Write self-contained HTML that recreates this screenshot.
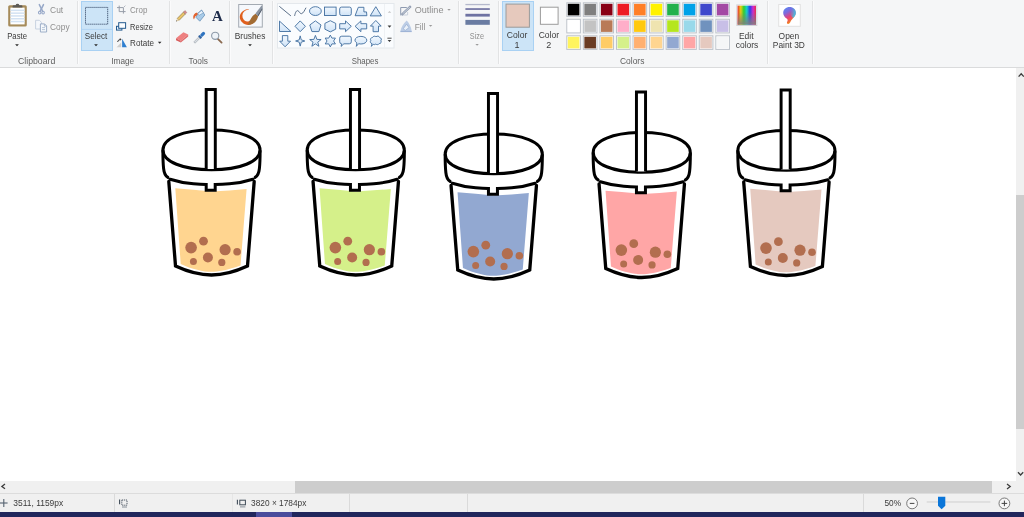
<!DOCTYPE html>
<html lang="en">
<head>
<meta charset="utf-8">
<title>Paint</title>
<style>
html,body{margin:0;padding:0;}
body{width:1024px;height:517px;overflow:hidden;background:#fff;position:relative;font-family:"Liberation Sans",sans-serif;}
#ribbon{position:absolute;left:0;top:0;width:1024px;height:67px;background:#f5f6f7;border-bottom:1px solid #dadbdc;}
#canvas{position:absolute;left:0;top:68px;width:1015.5px;height:413px;background:#fff;}
#vscroll{position:absolute;left:1015.5px;top:68px;width:8.5px;height:413px;background:#f0f0f0;}
#vthumb{position:absolute;left:0.5px;top:127px;width:8px;height:233.6px;background:#cdcdcd;}
#hscroll{position:absolute;left:0;top:481px;width:1024px;height:12px;background:#f0f0f0;}
#hthumb{position:absolute;left:295.2px;top:0;width:696.7px;height:12px;background:#cdcdcd;}
#status{position:absolute;left:0;top:493px;width:1024px;height:19px;background:#f0f0f0;border-top:1px solid #dcdcdc;box-sizing:border-box;}
#taskbar{position:absolute;left:0;top:512px;width:1024px;height:5px;background:#21265c;}
#taskhl{position:absolute;left:256px;top:0;width:36px;height:5px;background:#4a4c9c;}
svg{position:absolute;left:0;top:0;overflow:visible;will-change:transform;}
svg text{font-family:"Liberation Sans",sans-serif;font-size:9px;}
.t{fill:#3b3b3b;}
.d{fill:#8e8e8e;}
.g{fill:#5e5e5e;}
</style>
</head>
<body>
<div id="ribbon"></div>
<div id="canvas"></div>
<div id="vscroll"><div id="vthumb"></div></div>
<div id="hscroll"><div id="hthumb"></div></div>
<div id="status"></div>
<div id="taskbar"><div id="taskhl"></div></div>

<!-- RIBBON -->
<svg id="rib" width="1024" height="68" viewBox="0 0 1024 68">
<defs>
<linearGradient id="shpf" x1="0" y1="0" x2="0" y2="1"><stop offset="0" stop-color="#f2f8fe"/><stop offset="1" stop-color="#cfe3f7"/></linearGradient>
<linearGradient id="rainbow" x1="0" y1="0" x2="1" y2="0"><stop offset="0" stop-color="#ff2020"/><stop offset="0.17" stop-color="#ffe000"/><stop offset="0.34" stop-color="#20e020"/><stop offset="0.5" stop-color="#00e0e0"/><stop offset="0.67" stop-color="#2030ff"/><stop offset="0.84" stop-color="#e020e0"/><stop offset="1" stop-color="#ff2040"/></linearGradient>
<linearGradient id="fadegray" x1="0" y1="0" x2="0" y2="1"><stop offset="0" stop-color="#707070" stop-opacity="0.12"/><stop offset="0.35" stop-color="#787878" stop-opacity="0.2"/><stop offset="1" stop-color="#808080" stop-opacity="0.95"/></linearGradient>
<linearGradient id="p3d" x1="0.15" y1="0" x2="0.6" y2="1"><stop offset="0" stop-color="#5a8af0"/><stop offset="0.3" stop-color="#7a6ae0"/><stop offset="0.6" stop-color="#e8407a"/><stop offset="0.85" stop-color="#f07030"/><stop offset="1" stop-color="#f8c820"/></linearGradient>
<linearGradient id="p3d2" x1="0" y1="0" x2="1" y2="0.4"><stop offset="0.3" stop-color="#30c0f0" stop-opacity="0"/><stop offset="1" stop-color="#30c8f0" stop-opacity="0.95"/></linearGradient>
</defs>
<!-- separators -->
<g stroke="#fbfbfc" stroke-width="1">
<line x1="78.5" y1="1" x2="78.5" y2="64"/><line x1="170.5" y1="1" x2="170.5" y2="64"/><line x1="230.5" y1="1" x2="230.5" y2="64"/><line x1="273.5" y1="1" x2="273.5" y2="64"/><line x1="459.5" y1="1" x2="459.5" y2="64"/><line x1="499.5" y1="1" x2="499.5" y2="64"/><line x1="768.5" y1="1" x2="768.5" y2="64"/><line x1="813.5" y1="1" x2="813.5" y2="64"/>
</g>
<g stroke="#e2e3e4" stroke-width="1">
<line x1="77.5" y1="1" x2="77.5" y2="64"/>
<line x1="169.5" y1="1" x2="169.5" y2="64"/>
<line x1="229.5" y1="1" x2="229.5" y2="64"/>
<line x1="272.5" y1="1" x2="272.5" y2="64"/>
<line x1="458.5" y1="1" x2="458.5" y2="64"/>
<line x1="498.5" y1="1" x2="498.5" y2="64"/>
<line x1="767.5" y1="1" x2="767.5" y2="64"/>
<line x1="812.5" y1="1" x2="812.5" y2="64"/>
</g>
<!--CLIPBOARD-->
<g id="g-clipboard">
<!-- paste icon -->
<rect x="8.2" y="5.2" width="18.6" height="21.4" rx="1.6" fill="#a68b5a"/>
<rect x="10.4" y="7.6" width="14.2" height="16.8" fill="#fff"/>
<g fill="#d3e2f2"><rect x="10.4" y="9.6" width="14.2" height="1.5"/><rect x="10.4" y="12.4" width="14.2" height="1.5"/><rect x="10.4" y="15.2" width="14.2" height="1.5"/><rect x="10.4" y="18" width="14.2" height="1.5"/><rect x="10.4" y="20.8" width="14.2" height="1.5"/></g>
<path d="M12.6 7.6 V6 Q12.6 5.2 13.6 5.2 H15.6 Q16 3.8 17.5 3.8 Q19 3.8 19.4 5.2 H21.4 Q22.4 5.2 22.4 6 V7.6Z" fill="#5d5a55"/>
<text class="t" x="7.2" y="38.5" textLength="19.8" lengthAdjust="spacingAndGlyphs">Paste</text>
<path d="M15.1 43.6h3.8l-1.9 2z" fill="#2b2b2b" transform="translate(0 0.6)"/>
<!-- cut icon (disabled) -->
<g fill="none" stroke="#97a8c8" stroke-linecap="round">
<path d="M39.3 4.6 L42.7 11.4" stroke-width="1.5"/><path d="M43.5 4.6 L40.1 11.4" stroke-width="1.5"/>
<ellipse cx="39.7" cy="12.6" rx="1.25" ry="1.4" stroke-width="1.1"/><ellipse cx="43.1" cy="12.6" rx="1.25" ry="1.4" stroke-width="1.1"/>
</g>
<text class="d" x="50.1" y="12.9" textLength="13.1" lengthAdjust="spacingAndGlyphs">Cut</text>
<!-- copy icon (disabled) -->
<g stroke-width="0.9">
<path d="M35.6 20.3 H39.4 L41.4 22.3 V29 H35.6Z" fill="#f4f7fb" stroke="#c3cede"/>
<path d="M40.4 23.9 H44.6 L46.6 25.9 V32 H40.4Z" fill="#f6f9fc" stroke="#93a6c2"/>
<path d="M44.4 24 V26.1 H46.5" fill="none" stroke="#93a6c2" stroke-width="0.7"/>
<path d="M42 27.6 H45 M42 29.6 H45" fill="none" stroke="#9fb1cb" stroke-width="0.7"/>
</g>
<text class="d" x="50.1" y="29.6" textLength="19.5" lengthAdjust="spacingAndGlyphs">Copy</text>
<text class="g" x="18" y="63.5" textLength="37.3" lengthAdjust="spacingAndGlyphs">Clipboard</text>
</g>
<!--IMAGE-->
<g id="g-image">
<rect x="81.5" y="1.5" width="31" height="49" fill="#cce4f7" stroke="#a9d1f3"/>
<line x1="82" y1="29.4" x2="112" y2="29.4" stroke="#b2d5f3"/>
<rect x="85.5" y="7.4" width="22.2" height="16.8" fill="none" stroke="#2a3d5c" stroke-width="0.95" stroke-dasharray="1.1 0.9"/>
<text class="t" x="84.8" y="38.5" textLength="22.4" lengthAdjust="spacingAndGlyphs">Select</text>
<path d="M94.1 43.6h3.8l-1.9 2z" fill="#2b2b2b" transform="translate(0 0.6)"/>
<!-- crop icon (disabled) -->
<g fill="none" stroke="#979da8" stroke-width="1"><path d="M119.2 5.6 V11.6 H125.6"/><path d="M117 7.6 H123.4 V13.6"/><path d="M123.6 7.4 L125.4 5.6" stroke="#b2b7c1"/></g>
<text class="d" x="130.1" y="12.9" textLength="17.3" lengthAdjust="spacingAndGlyphs">Crop</text>
<!-- resize icon -->
<g stroke="#245a8e" stroke-width="1"><rect x="116.5" y="26.3" width="5.4" height="3.8" fill="#e3eefa"/><rect x="118.7" y="22.7" width="6.9" height="5.6" fill="#fbfdff"/></g>
<text class="t" x="130.1" y="29.5" textLength="22.8" lengthAdjust="spacingAndGlyphs">Resize</text>
<!-- rotate icon -->
<path d="M122.1 47.2 V38.8 L126.9 47.2Z" fill="#2f7fd0"/>
<path d="M121.2 47.2 V42.6 L116.6 47.2Z" fill="#cfcfcf"/>
<path d="M117.6 42 Q118 39.6 120.4 39.4" fill="none" stroke="#3a3a3a" stroke-width="1"/><path d="M119.8 38.1 L121.6 39.4 L119.8 40.7Z" fill="#3a3a3a"/>
<text class="t" x="130.1" y="45.8" textLength="23.8" lengthAdjust="spacingAndGlyphs">Rotate</text>
<path d="M157.9 41.8h3.6l-1.8 2z" fill="#2b2b2b"/>
<text class="g" x="111.3" y="63.5" textLength="22.9" lengthAdjust="spacingAndGlyphs">Image</text>
</g>
<!--TOOLS-->
<g id="g-tools">
<!-- pencil -->
<g transform="translate(181.3 16.2) rotate(-45.5)">
<rect x="-4.6" y="-1.35" width="9" height="2.7" fill="#e9c468" stroke="#7d6c46" stroke-width="0.55"/>
<rect x="4.4" y="-1.35" width="2.2" height="2.7" fill="#d98a8a" stroke="#8a6a6a" stroke-width="0.4"/>
<path d="M-4.6 -1.35 L-7.4 0 L-4.6 1.35Z" fill="#e8d2a8"/><path d="M-6.3 -0.55 L-7.5 0 L-6.3 0.55Z" fill="#333"/>
</g>
<!-- bucket -->
<g>
<path d="M197.6 13.4 L201.6 10 L204.8 15 L199.8 21.2 L196 17.4Z" fill="#a8cbe8" stroke="#5b86b0" stroke-width="0.7"/>
<path d="M197.8 13.6 L201.6 10.4 L203.4 12.8 L199 15.4Z" fill="#e7f1fa" stroke="#5b86b0" stroke-width="0.5"/>
<path d="M197.2 12.6 Q193.6 13.4 193.2 16.8 Q193 18.6 194 19.4 Q194.6 16 197.6 14.8Z" fill="#e2622e"/>
</g>
<!-- text A -->
<text x="212" y="20.8" textLength="10.8" lengthAdjust="spacingAndGlyphs" style='font-family:"Liberation Serif",serif;font-weight:bold;font-size:14.2px' fill="#1d2b4a">A</text>
<!-- eraser -->
<g>
<path d="M176 38.2 L183.4 32.2 L188.2 34.6 L180.8 40.8Z" fill="#ee8080"/>
<path d="M176 38.2 L180.8 40.8 L180.8 42.6 L176 40.2Z" fill="#d85c5c"/>
<path d="M180.8 40.8 L188.2 34.6 L188.2 36.4 L180.8 42.6Z" fill="#e06a6a"/>
</g>
<!-- eyedropper -->
<g transform="translate(199.8 37.2) rotate(-45)">
<rect x="-7.6" y="-0.9" width="7.4" height="1.8" fill="#d8dde2" stroke="#8a949e" stroke-width="0.5"/>
<rect x="-0.6" y="-1.8" width="2" height="3.6" fill="#2d5f9e"/>
<rect x="1.4" y="-1.6" width="5.4" height="3.2" rx="1.5" fill="#2f74c0"/>
</g>
<!-- magnifier -->
<g>
<path d="M217.8 38.8 L221.6 42.6" stroke="#8a6a50" stroke-width="1.8" stroke-linecap="round"/>
<circle cx="215.2" cy="35.8" r="3.6" fill="#eef3f8" stroke="#8d9aa8" stroke-width="1.1"/>
</g>
<text class="g" x="188.6" y="63.5" textLength="19.4" lengthAdjust="spacingAndGlyphs">Tools</text>
</g>
<!--BRUSHES-->
<g id="g-brushes">
<rect x="238.7" y="4.5" width="23.6" height="22.6" fill="#f5f8fc" stroke="#a3aab2" stroke-width="1"/>
<path d="M248.8 9 C245 9.2 240.4 11.6 239.8 16.4 C239.6 21 243.6 24.6 248.4 24.9 C250.6 24.9 252.4 24.2 253.4 22.8 L250.2 20.2 C248.8 21.8 246.6 22 244.8 20.8 C242.6 19.2 241.8 16.4 242.8 13.6 C243.8 11.4 245.8 10 248.8 9.6 Z" fill="#e0601e"/>
<path d="M247.4 24.6 C249.6 22.8 249.6 20 251.6 17.4 C253 15.6 254.6 14.4 255.8 13.8 L258.2 16 C257.8 18 256.8 20.4 255 22.2 C253 24.2 250 25 247.4 24.6Z" fill="#a26c34"/>
<path d="M255.4 13.6 L261.4 5.8 L262.2 5.8 L262.2 9.4 L258.2 16.2Z" fill="#8b95a3"/>
<path d="M257.6 15.6 L262.2 8.2 V9.6 L258.3 16.3Z" fill="#4f5966"/>
<text class="t" x="234.8" y="38.5" textLength="30.6" lengthAdjust="spacingAndGlyphs">Brushes</text>
<path d="M248.1 43.6h3.8l-1.9 2z" fill="#2b2b2b" transform="translate(0 0.6)"/>
</g>
<!--SHAPES-->
<g id="g-shapes">
<rect x="277.5" y="3.5" width="116.5" height="44.5" fill="#fafcfe" stroke="#e4e8ec"/>
<line x1="384.5" y1="4" x2="384.5" y2="48" stroke="#eef1f4"/>
<g fill="url(#shpf)" stroke="#3f6d9e" stroke-width="0.9" stroke-linejoin="miter">
<g transform="translate(285.1 11.3)"><path d="M-5.8 -5 L5.8 4.6" stroke="#4a607c" fill="none"/></g>
<g transform="translate(300.2 11.3)"><path d="M-5.6 4.6 C-4.8 0.5 -3.5 -1 -2.3 -0.6 C-0.8 0 -0.3 2.6 1.2 2.4 C3.3 2 4.6 -1.5 5.8 -3.6" fill="none" stroke="#4a607c"/></g>
<g transform="translate(315.4 11.3)"><ellipse cx="0" cy="-0.2" rx="5.9" ry="4.4"/></g>
<g transform="translate(330.3 11.3)"><rect x="-5.8" y="-4.2" width="11.6" height="8.4"/></g>
<g transform="translate(345.5 11.3)"><rect x="-5.8" y="-4.2" width="11.6" height="8.4" rx="1.8"/></g>
<g transform="translate(360.9 11.3)"><polygon points="-2.6,-4 3,-4 3,0.6 5.6,0.6 6,4.4 -5.8,4.4"/></g>
<g transform="translate(375.8 11.3)"><polygon points="0,-4.6 5.6,4.6 -5.6,4.6"/></g>
<g transform="translate(285.1 26.3)"><polygon points="-5.6,-5.2 5.8,5.2 -5.6,5.2"/></g>
<g transform="translate(300.2 26.3)"><polygon points="0,-5.4 5.2,0 0,5.4 -5.2,0"/></g>
<g transform="translate(315.4 26.3)"><polygon points="0.00,-5.40 5.61,-1.32 3.47,5.27 -3.47,5.27 -5.61,-1.32"/></g>
<g transform="translate(330.3 26.3)"><polygon points="0,-5.6 5.4,-2.9 5.4,2.9 0,5.6 -5.4,2.9 -5.4,-2.9"/></g>
<g transform="translate(345.5 26.3)"><polygon points="-5.8,-2.6 0,-2.6 0,-5.4 5.8,0 0,5.4 0,2.6 -5.8,2.6"/></g>
<g transform="translate(360.9 26.3)"><polygon points="5.8,-2.6 0,-2.6 0,-5.4 -5.8,0 0,5.4 0,2.6 5.8,2.6"/></g>
<g transform="translate(375.8 26.3)"><polygon points="0,-5.8 5.4,-0.2 2.7,-0.2 2.7,5.4 -2.7,5.4 -2.7,-0.2 -5.4,-0.2"/></g>
<g transform="translate(285.1 41.0)"><polygon points="0,5.8 5.4,0.2 2.7,0.2 2.7,-5.4 -2.7,-5.4 -2.7,0.2 -5.4,0.2"/></g>
<g transform="translate(300.2 41.0)"><polygon points="0.00,-5.13 1.02,-1.14 4.59,0.00 1.02,1.14 0.00,5.13 -1.02,1.14 -4.59,0.00 -1.02,-1.14"/></g>
<g transform="translate(315.4 41.0)"><polygon points="0.00,-5.60 1.47,-1.62 5.71,-1.45 2.38,1.17 3.53,5.25 0.00,2.90 -3.53,5.25 -2.38,1.17 -5.71,-1.45 -1.47,-1.62"/></g>
<g transform="translate(330.3 41.0)"><polygon points="0.00,-5.90 1.65,-2.86 5.11,-2.95 3.30,0.00 5.11,2.95 1.65,2.86 0.00,5.90 -1.65,2.86 -5.11,2.95 -3.30,0.00 -5.11,-2.95 -1.65,-2.86"/></g>
<g transform="translate(345.5 41.0)"><path d="M-3.8 -4.8 H3.8 Q5.8 -4.8 5.8 -2.8 V0.8 Q5.8 2.8 3.8 2.8 H-1.6 L-4.4 5.4 L-3.9 2.8 Q-5.8 2.8 -5.8 0.8 V-2.8 Q-5.8 -4.8 -3.8 -4.8Z"/></g>
<g transform="translate(360.9 41.0)"><path d="M0 -4.6 C3.4 -4.6 5.9 -3 5.9 -0.8 C5.9 1.4 3.4 3 0 3 C-0.8 3 -1.6 2.9 -2.3 2.7 L-4.6 5.4 L-4 1.9 C-5.2 1.2 -5.9 0.2 -5.9 -0.8 C-5.9 -3 -3.4 -4.6 0 -4.6Z"/></g>
<g transform="translate(375.8 41.0)"><path d="M-3.2 -3.6 C-2.6 -5 -0.6 -5.2 0.2 -4.2 C1.2 -5.4 3.6 -5 3.9 -3.4 C5.6 -3.2 6.2 -1.2 5 -0.2 C6 1 5 2.8 3.4 2.6 C2.8 3.8 0.8 4 0 3 C-0.6 3.8 -2 3.8 -2.6 3.2 L-4.4 5.4 L-3.8 2.6 C-5.4 2.4 -6 0.6 -5 -0.4 C-6 -1.6 -4.8 -3.6 -3.2 -3.6Z"/></g>
</g>

<path d="M387.8 12.8 h3.4 l-1.7 -1.9z" fill="#c4c4c4"/>
<path d="M387.6 25.6 h3.8 l-1.9 2.1z" fill="#3a3a3a"/>
<path d="M387.4 38.2 h4.2" stroke="#3a3a3a" stroke-width="0.9"/><path d="M387.6 40 h3.8 l-1.9 2.1z" fill="#3a3a3a"/>
<!-- outline icon -->
<g fill="none" stroke-linecap="butt"><path d="M400.7 15.4 V7.5 H406.8" stroke="#8e9bb0" stroke-width="1"/><path d="M400.7 15 H407.6 V12" stroke="#c5cdd9" stroke-width="0.9"/><path d="M401.6 14.8 L410.8 6.2" stroke="#8f9bb0" stroke-width="2.3"/><path d="M402.6 13.8 L409.8 7.1" stroke="#dde3ec" stroke-width="0.8"/></g>
<text class="d" x="414.7" y="12.9" textLength="28.8" lengthAdjust="spacingAndGlyphs">Outline</text>
<path d="M447.3 8.9h3.4l-1.7 1.8z" fill="#9a9a9a"/>
<!-- fill icon -->
<g><path d="M400.4 31.6 C400.9 27.4 403.2 24 406.7 20.6 C409.4 23.6 411.2 27.2 411.7 31.6Z" fill="#bccde6"/><path d="M403.2 28.8 L406.6 24.2 L409 27.6 L405.4 30.4Z" fill="#e9f0f9" stroke="#95acd0" stroke-width="0.7"/><path d="M400.4 31.5 H411.7" stroke="#9fb4d6" stroke-width="1.2"/></g>
<text class="d" x="414.7" y="29.5" textLength="10.6" lengthAdjust="spacingAndGlyphs">Fill</text>
<path d="M428.9 25h3.4l-1.7 1.8z" fill="#9a9a9a"/>
<text class="g" x="351.7" y="63.5" textLength="26.7" lengthAdjust="spacingAndGlyphs">Shapes</text>
</g>
<!--SIZE-->
<g id="g-size">
<rect x="465.4" y="3.9" width="24.4" height="1.3" fill="#b4b8cc"/>
<rect x="465.4" y="8.1" width="24.4" height="1.9" fill="#7e80aa"/>
<rect x="465.4" y="13.8" width="24.4" height="2.8" fill="#6e72a2"/>
<rect x="465.4" y="19.9" width="24.4" height="4.9" fill="#6a7ca2"/>
<text class="d" x="469.8" y="38.5" textLength="14.2" lengthAdjust="spacingAndGlyphs">Size</text>
<path d="M475.4 44.1h3.4l-1.7 1.7z" fill="#9a9a9a"/>
</g>
<!--COLORS-->
<g id="g-colors">
<rect x="502.5" y="1.5" width="31" height="49" fill="#cce4f7" stroke="#a9d1f3"/>
<rect x="506" y="4.1" width="23.4" height="23.1" fill="#e6c9bd" stroke="#9b9b9b"/>
<text class="t" x="506.8" y="38.4" textLength="20.5" lengthAdjust="spacingAndGlyphs">Color</text>
<text class="t" x="516.9" y="47.7" text-anchor="middle">1</text>
<rect x="540.4" y="7.2" width="17.7" height="17.1" fill="#fff" stroke="#9b9b9b"/>
<text class="t" x="538.7" y="38.4" textLength="20.4" lengthAdjust="spacingAndGlyphs">Color</text>
<text class="t" x="548.7" y="47.7" text-anchor="middle">2</text>
<g>
<rect x="566.80" y="2.80" width="13.6" height="13.6" fill="#fff" stroke="#bdc3ca" stroke-width="1"/><rect x="567.80" y="3.80" width="11.6" height="11.6" fill="#000000"/>
<rect x="583.36" y="2.80" width="13.6" height="13.6" fill="#fff" stroke="#bdc3ca" stroke-width="1"/><rect x="584.36" y="3.80" width="11.6" height="11.6" fill="#7f7f7f"/>
<rect x="599.92" y="2.80" width="13.6" height="13.6" fill="#fff" stroke="#bdc3ca" stroke-width="1"/><rect x="600.92" y="3.80" width="11.6" height="11.6" fill="#880015"/>
<rect x="616.48" y="2.80" width="13.6" height="13.6" fill="#fff" stroke="#bdc3ca" stroke-width="1"/><rect x="617.48" y="3.80" width="11.6" height="11.6" fill="#ed1c24"/>
<rect x="633.04" y="2.80" width="13.6" height="13.6" fill="#fff" stroke="#bdc3ca" stroke-width="1"/><rect x="634.04" y="3.80" width="11.6" height="11.6" fill="#ff7f27"/>
<rect x="649.60" y="2.80" width="13.6" height="13.6" fill="#fff" stroke="#bdc3ca" stroke-width="1"/><rect x="650.60" y="3.80" width="11.6" height="11.6" fill="#fff200"/>
<rect x="666.16" y="2.80" width="13.6" height="13.6" fill="#fff" stroke="#bdc3ca" stroke-width="1"/><rect x="667.16" y="3.80" width="11.6" height="11.6" fill="#22b14c"/>
<rect x="682.72" y="2.80" width="13.6" height="13.6" fill="#fff" stroke="#bdc3ca" stroke-width="1"/><rect x="683.72" y="3.80" width="11.6" height="11.6" fill="#00a2e8"/>
<rect x="699.28" y="2.80" width="13.6" height="13.6" fill="#fff" stroke="#bdc3ca" stroke-width="1"/><rect x="700.28" y="3.80" width="11.6" height="11.6" fill="#3f48cc"/>
<rect x="715.84" y="2.80" width="13.6" height="13.6" fill="#fff" stroke="#bdc3ca" stroke-width="1"/><rect x="716.84" y="3.80" width="11.6" height="11.6" fill="#a349a4"/>
<rect x="566.80" y="19.30" width="13.6" height="13.6" fill="#fff" stroke="#bdc3ca" stroke-width="1"/><rect x="567.80" y="20.30" width="11.6" height="11.6" fill="#ffffff"/>
<rect x="583.36" y="19.30" width="13.6" height="13.6" fill="#fff" stroke="#bdc3ca" stroke-width="1"/><rect x="584.36" y="20.30" width="11.6" height="11.6" fill="#c3c3c3"/>
<rect x="599.92" y="19.30" width="13.6" height="13.6" fill="#fff" stroke="#bdc3ca" stroke-width="1"/><rect x="600.92" y="20.30" width="11.6" height="11.6" fill="#b97a57"/>
<rect x="616.48" y="19.30" width="13.6" height="13.6" fill="#fff" stroke="#bdc3ca" stroke-width="1"/><rect x="617.48" y="20.30" width="11.6" height="11.6" fill="#ffaec9"/>
<rect x="633.04" y="19.30" width="13.6" height="13.6" fill="#fff" stroke="#bdc3ca" stroke-width="1"/><rect x="634.04" y="20.30" width="11.6" height="11.6" fill="#ffc90e"/>
<rect x="649.60" y="19.30" width="13.6" height="13.6" fill="#fff" stroke="#bdc3ca" stroke-width="1"/><rect x="650.60" y="20.30" width="11.6" height="11.6" fill="#efe4b0"/>
<rect x="666.16" y="19.30" width="13.6" height="13.6" fill="#fff" stroke="#bdc3ca" stroke-width="1"/><rect x="667.16" y="20.30" width="11.6" height="11.6" fill="#b5e61d"/>
<rect x="682.72" y="19.30" width="13.6" height="13.6" fill="#fff" stroke="#bdc3ca" stroke-width="1"/><rect x="683.72" y="20.30" width="11.6" height="11.6" fill="#99d9ea"/>
<rect x="699.28" y="19.30" width="13.6" height="13.6" fill="#fff" stroke="#bdc3ca" stroke-width="1"/><rect x="700.28" y="20.30" width="11.6" height="11.6" fill="#7092be"/>
<rect x="715.84" y="19.30" width="13.6" height="13.6" fill="#fff" stroke="#bdc3ca" stroke-width="1"/><rect x="716.84" y="20.30" width="11.6" height="11.6" fill="#c8bfe7"/>
<rect x="566.80" y="35.80" width="13.6" height="13.6" fill="#fff" stroke="#bdc3ca" stroke-width="1"/><rect x="567.80" y="36.80" width="11.6" height="11.6" fill="#fff45e"/>
<rect x="583.36" y="35.80" width="13.6" height="13.6" fill="#fff" stroke="#bdc3ca" stroke-width="1"/><rect x="584.36" y="36.80" width="11.6" height="11.6" fill="#6a3c24"/>
<rect x="599.92" y="35.80" width="13.6" height="13.6" fill="#fff" stroke="#bdc3ca" stroke-width="1"/><rect x="600.92" y="36.80" width="11.6" height="11.6" fill="#ffcc66"/>
<rect x="616.48" y="35.80" width="13.6" height="13.6" fill="#fff" stroke="#bdc3ca" stroke-width="1"/><rect x="617.48" y="36.80" width="11.6" height="11.6" fill="#d5f08a"/>
<rect x="633.04" y="35.80" width="13.6" height="13.6" fill="#fff" stroke="#bdc3ca" stroke-width="1"/><rect x="634.04" y="36.80" width="11.6" height="11.6" fill="#ffb070"/>
<rect x="649.60" y="35.80" width="13.6" height="13.6" fill="#fff" stroke="#bdc3ca" stroke-width="1"/><rect x="650.60" y="36.80" width="11.6" height="11.6" fill="#ffd590"/>
<rect x="666.16" y="35.80" width="13.6" height="13.6" fill="#fff" stroke="#bdc3ca" stroke-width="1"/><rect x="667.16" y="36.80" width="11.6" height="11.6" fill="#92a8d1"/>
<rect x="682.72" y="35.80" width="13.6" height="13.6" fill="#fff" stroke="#bdc3ca" stroke-width="1"/><rect x="683.72" y="36.80" width="11.6" height="11.6" fill="#ffa6a6"/>
<rect x="699.28" y="35.80" width="13.6" height="13.6" fill="#fff" stroke="#bdc3ca" stroke-width="1"/><rect x="700.28" y="36.80" width="11.6" height="11.6" fill="#e5c9bf"/>
<rect x="715.84" y="35.80" width="13.6" height="13.6" fill="#fff" stroke="#bdc3ca" stroke-width="1"/><rect x="716.84" y="36.80" width="11.6" height="11.6" fill="#f5f6f7"/>
</g>

<rect x="736.8" y="4.9" width="20" height="20.6" fill="#fff" stroke="#d0d3d7" stroke-width="1"/>
<rect x="737.6" y="5.7" width="18.4" height="19" fill="url(#rainbow)"/>
<rect x="737.6" y="5.7" width="18.4" height="19" fill="url(#fadegray)"/>
<text class="t" x="738.9" y="38.5" textLength="14.6" lengthAdjust="spacingAndGlyphs">Edit</text>
<text class="t" x="735.7" y="47.8" textLength="22.6" lengthAdjust="spacingAndGlyphs">colors</text>
<text class="g" x="620" y="63.5" textLength="24.4" lengthAdjust="spacingAndGlyphs">Colors</text>
</g>
<!--PAINT3D-->
<g id="g-p3d">
<rect x="778.7" y="4.5" width="21.6" height="21.8" fill="#fff" stroke="#e2e2e2"/>
<path id="drop" d="M789.6 7 C793.2 7 795.8 9.6 795.8 12.8 C795.8 16.4 792.4 18.6 790.6 21.4 C790 22.6 789.4 24 788.2 24 C786.8 24 786.6 22.4 787.4 21.2 C788 20.2 787.6 19.4 786.6 18.6 C784.6 17.2 783.2 15.4 783.2 12.8 C783.2 9.6 786 7 789.6 7Z" fill="url(#p3d)"/>
<path d="M789.6 7 C793.2 7 795.8 9.6 795.8 12.8 C795.8 15 794.6 16.6 793.2 18 C791 16 788 12 789.6 7Z" fill="url(#p3d2)"/>
<text class="t" x="778.6" y="38.5" textLength="20.6" lengthAdjust="spacingAndGlyphs">Open</text>
<text class="t" x="772.8" y="47.8" textLength="32.1" lengthAdjust="spacingAndGlyphs">Paint 3D</text>
</g>
</svg>

<!-- DRAWING -->
<svg id="art" width="1024" height="517" viewBox="0 0 1024 517">
<g class="cup cup-mango" transform="translate(211.5 0)" color="#ffd590">
  <!-- liquid -->
  <path d="M-36.2 188.2 Q-18 189.5 0 191.5 Q18 190.5 35.1 189 L29 265.5 C15 270.5 6 271.8 0 271.8 C-8 271.8 -20 269 -30.8 263.9 Z" fill="currentColor"/>
  <!-- boba -->
  <g fill="#b26e4f">
    <circle cx="-20.4" cy="247.6" r="5.8"/><circle cx="-8" cy="241.2" r="4.4"/><circle cx="-3.6" cy="257.5" r="5"/><circle cx="-18.1" cy="261.6" r="3.5"/>
    <circle cx="13.6" cy="249.7" r="5.6"/><circle cx="25.6" cy="251.7" r="3.8"/><circle cx="10.3" cy="262.4" r="3.6"/>
  </g>
  <g fill="none" stroke="#000" stroke-width="3.0" stroke-linecap="round" stroke-linejoin="miter">
    <!-- lid ellipse -->
    <path d="M48.55 149.90 C48.55 161.64 28.64 169.80 0 169.80 C-28.64 169.80 -48.55 161.64 -48.55 149.90 C-48.55 138.16 -28.64 130.00 0 130.00 C28.64 130.00 48.55 138.16 48.55 149.90Z" fill="#fff"/>
    <!-- straw -->
    <path d="M-5.3 169 V89.55 H3.8 V169" fill="#fff" stroke-linecap="butt" stroke-width="2.95"/>
    <!-- lid sides -->
    <path d="M-48.6 150.5 C-48.6 158 -48.4 164 -47.9 168.5 C-47.5 172.5 -46.8 175.6 -43.6 177.4"/>
    <path d="M48.6 151 C48.6 158 48.4 164 47.9 168.5 C47.5 172.5 46.8 175.6 43.6 177.4"/>
    <!-- lid bottom band with notch -->
    <path d="M-41.4 179.2 C-34 181.6 -26 183.1 -18 183.8 C-12 184.3 -8 184.4 -5.3 184.4 V190.3 H3.7 V184.4 C8 184.4 12 184.3 18 183.8 C26 183.1 34 181.6 41.4 179.2"/>
    <!-- cup body -->
    <path d="M-42.7 181.5 L-36 266 C-22 272.5 -9 275 0 275 C9 275 22 272.5 36 266 L42.7 181.5" stroke-width="3.3"/>
  </g>
</g>
<g class="cup cup-matcha" transform="translate(355.75 0)" color="#d5f08a">
  <!-- liquid -->
  <path d="M-36.2 188.2 Q-18 189.5 0 191.5 Q18 190.5 35.1 189 L29 265.5 C15 270.5 6 271.8 0 271.8 C-8 271.8 -20 269 -30.8 263.9 Z" fill="currentColor"/>
  <!-- boba -->
  <g fill="#b26e4f">
    <circle cx="-20.4" cy="247.6" r="5.8"/><circle cx="-8" cy="241.2" r="4.4"/><circle cx="-3.6" cy="257.5" r="5"/><circle cx="-18.1" cy="261.6" r="3.5"/>
    <circle cx="13.6" cy="249.7" r="5.6"/><circle cx="25.6" cy="251.7" r="3.8"/><circle cx="10.3" cy="262.4" r="3.6"/>
  </g>
  <g fill="none" stroke="#000" stroke-width="3.0" stroke-linecap="round" stroke-linejoin="miter">
    <!-- lid ellipse -->
    <path d="M48.55 149.90 C48.55 161.64 28.64 169.80 0 169.80 C-28.64 169.80 -48.55 161.64 -48.55 149.90 C-48.55 138.16 -28.64 130.00 0 130.00 C28.64 130.00 48.55 138.16 48.55 149.90Z" fill="#fff"/>
    <!-- straw -->
    <path d="M-5.3 169 V89.55 H3.8 V169" fill="#fff" stroke-linecap="butt" stroke-width="2.95"/>
    <!-- lid sides -->
    <path d="M-48.6 150.5 C-48.6 158 -48.4 164 -47.9 168.5 C-47.5 172.5 -46.8 175.6 -43.6 177.4"/>
    <path d="M48.6 151 C48.6 158 48.4 164 47.9 168.5 C47.5 172.5 46.8 175.6 43.6 177.4"/>
    <!-- lid bottom band with notch -->
    <path d="M-41.4 179.2 C-34 181.6 -26 183.1 -18 183.8 C-12 184.3 -8 184.4 -5.3 184.4 V190.3 H3.7 V184.4 C8 184.4 12 184.3 18 183.8 C26 183.1 34 181.6 41.4 179.2"/>
    <!-- cup body -->
    <path d="M-42.7 181.5 L-36 266 C-22 272.5 -9 275 0 275 C9 275 22 272.5 36 266 L42.7 181.5" stroke-width="3.3"/>
  </g>
</g>
<g class="cup cup-taro-blue" transform="translate(493.75 4)" color="#92a8d1">
  <!-- liquid -->
  <path d="M-36.2 188.2 Q-18 189.5 0 191.5 Q18 190.5 35.1 189 L29 265.5 C15 270.5 6 271.8 0 271.8 C-8 271.8 -20 269 -30.8 263.9 Z" fill="currentColor"/>
  <!-- boba -->
  <g fill="#b26e4f">
    <circle cx="-20.4" cy="247.6" r="5.8"/><circle cx="-8" cy="241.2" r="4.4"/><circle cx="-3.6" cy="257.5" r="5"/><circle cx="-18.1" cy="261.6" r="3.5"/>
    <circle cx="13.6" cy="249.7" r="5.6"/><circle cx="25.6" cy="251.7" r="3.8"/><circle cx="10.3" cy="262.4" r="3.6"/>
  </g>
  <g fill="none" stroke="#000" stroke-width="3.0" stroke-linecap="round" stroke-linejoin="miter">
    <!-- lid ellipse -->
    <path d="M48.55 149.90 C48.55 161.64 28.64 169.80 0 169.80 C-28.64 169.80 -48.55 161.64 -48.55 149.90 C-48.55 138.16 -28.64 130.00 0 130.00 C28.64 130.00 48.55 138.16 48.55 149.90Z" fill="#fff"/>
    <!-- straw -->
    <path d="M-5.3 169 V89.55 H3.8 V169" fill="#fff" stroke-linecap="butt" stroke-width="2.95"/>
    <!-- lid sides -->
    <path d="M-48.6 150.5 C-48.6 158 -48.4 164 -47.9 168.5 C-47.5 172.5 -46.8 175.6 -43.6 177.4"/>
    <path d="M48.6 151 C48.6 158 48.4 164 47.9 168.5 C47.5 172.5 46.8 175.6 43.6 177.4"/>
    <!-- lid bottom band with notch -->
    <path d="M-41.4 179.2 C-34 181.6 -26 183.1 -18 183.8 C-12 184.3 -8 184.4 -5.3 184.4 V190.3 H3.7 V184.4 C8 184.4 12 184.3 18 183.8 C26 183.1 34 181.6 41.4 179.2"/>
    <!-- cup body -->
    <path d="M-42.7 181.5 L-36 266 C-22 272.5 -9 275 0 275 C9 275 22 272.5 36 266 L42.7 181.5" stroke-width="3.3"/>
  </g>
</g>
<g class="cup cup-strawberry" transform="translate(641.75 2.5)" color="#ffa6a6">
  <!-- liquid -->
  <path d="M-36.2 188.2 Q-18 189.5 0 191.5 Q18 190.5 35.1 189 L29 265.5 C15 270.5 6 271.8 0 271.8 C-8 271.8 -20 269 -30.8 263.9 Z" fill="currentColor"/>
  <!-- boba -->
  <g fill="#b26e4f">
    <circle cx="-20.4" cy="247.6" r="5.8"/><circle cx="-8" cy="241.2" r="4.4"/><circle cx="-3.6" cy="257.5" r="5"/><circle cx="-18.1" cy="261.6" r="3.5"/>
    <circle cx="13.6" cy="249.7" r="5.6"/><circle cx="25.6" cy="251.7" r="3.8"/><circle cx="10.3" cy="262.4" r="3.6"/>
  </g>
  <g fill="none" stroke="#000" stroke-width="3.0" stroke-linecap="round" stroke-linejoin="miter">
    <!-- lid ellipse -->
    <path d="M48.55 149.90 C48.55 161.64 28.64 169.80 0 169.80 C-28.64 169.80 -48.55 161.64 -48.55 149.90 C-48.55 138.16 -28.64 130.00 0 130.00 C28.64 130.00 48.55 138.16 48.55 149.90Z" fill="#fff"/>
    <!-- straw -->
    <path d="M-5.3 169 V89.55 H3.8 V169" fill="#fff" stroke-linecap="butt" stroke-width="2.95"/>
    <!-- lid sides -->
    <path d="M-48.6 150.5 C-48.6 158 -48.4 164 -47.9 168.5 C-47.5 172.5 -46.8 175.6 -43.6 177.4"/>
    <path d="M48.6 151 C48.6 158 48.4 164 47.9 168.5 C47.5 172.5 46.8 175.6 43.6 177.4"/>
    <!-- lid bottom band with notch -->
    <path d="M-41.4 179.2 C-34 181.6 -26 183.1 -18 183.8 C-12 184.3 -8 184.4 -5.3 184.4 V190.3 H3.7 V184.4 C8 184.4 12 184.3 18 183.8 C26 183.1 34 181.6 41.4 179.2"/>
    <!-- cup body -->
    <path d="M-42.7 181.5 L-36 266 C-22 272.5 -9 275 0 275 C9 275 22 272.5 36 266 L42.7 181.5" stroke-width="3.3"/>
  </g>
</g>
<g class="cup cup-milk-tea" transform="translate(786.4 0.5)" color="#e5c9bf">
  <!-- liquid -->
  <path d="M-36.2 188.2 Q-18 189.5 0 191.5 Q18 190.5 35.1 189 L29 265.5 C15 270.5 6 271.8 0 271.8 C-8 271.8 -20 269 -30.8 263.9 Z" fill="currentColor"/>
  <!-- boba -->
  <g fill="#b26e4f">
    <circle cx="-20.4" cy="247.6" r="5.8"/><circle cx="-8" cy="241.2" r="4.4"/><circle cx="-3.6" cy="257.5" r="5"/><circle cx="-18.1" cy="261.6" r="3.5"/>
    <circle cx="13.6" cy="249.7" r="5.6"/><circle cx="25.6" cy="251.7" r="3.8"/><circle cx="10.3" cy="262.4" r="3.6"/>
  </g>
  <g fill="none" stroke="#000" stroke-width="3.0" stroke-linecap="round" stroke-linejoin="miter">
    <!-- lid ellipse -->
    <path d="M48.55 149.90 C48.55 161.64 28.64 169.80 0 169.80 C-28.64 169.80 -48.55 161.64 -48.55 149.90 C-48.55 138.16 -28.64 130.00 0 130.00 C28.64 130.00 48.55 138.16 48.55 149.90Z" fill="#fff"/>
    <!-- straw -->
    <path d="M-5.3 169 V89.55 H3.8 V169" fill="#fff" stroke-linecap="butt" stroke-width="2.95"/>
    <!-- lid sides -->
    <path d="M-48.6 150.5 C-48.6 158 -48.4 164 -47.9 168.5 C-47.5 172.5 -46.8 175.6 -43.6 177.4"/>
    <path d="M48.6 151 C48.6 158 48.4 164 47.9 168.5 C47.5 172.5 46.8 175.6 43.6 177.4"/>
    <!-- lid bottom band with notch -->
    <path d="M-41.4 179.2 C-34 181.6 -26 183.1 -18 183.8 C-12 184.3 -8 184.4 -5.3 184.4 V190.3 H3.7 V184.4 C8 184.4 12 184.3 18 183.8 C26 183.1 34 181.6 41.4 179.2"/>
    <!-- cup body -->
    <path d="M-42.7 181.5 L-36 266 C-22 272.5 -9 275 0 275 C9 275 22 272.5 36 266 L42.7 181.5" stroke-width="3.3"/>
  </g>
</g>
</svg>

<!-- STATUS -->
<svg id="stat" width="1024" height="517" viewBox="0 0 1024 517">
<g stroke="#dadada"><line x1="114.5" y1="494" x2="114.5" y2="512"/><line x1="232.5" y1="494" x2="232.5" y2="512" stroke="#e6e6e6"/><line x1="349.5" y1="494" x2="349.5" y2="512"/><line x1="467.5" y1="494" x2="467.5" y2="512"/><line x1="863.5" y1="494" x2="863.5" y2="512"/></g>
<!-- scroll arrows -->
<g fill="none" stroke="#3c3c3c" stroke-width="1.3">
<path d="M5 484.1 L1.9 486.4 L5 488.7"/>
<path d="M1007 484.1 L1010.2 486.5 L1007 488.9"/>
<path d="M1018.6 76.6 L1021.2 73.8 L1023.8 76.6"/>
<path d="M1018 472.2 L1020.6 475 L1023.2 472.2"/>
</g>
<!-- cursor pos icon -->
<g stroke="#55626f" stroke-width="1.1" fill="none"><path d="M3.8 499 V507"/><path d="M0 503 H7.6"/></g>
<text class="t" style="font-size:9.6px" x="13.3" y="506.3" textLength="49.9" lengthAdjust="spacingAndGlyphs">3511, 1159px</text>
<!-- selection size icon -->
<g fill="none" stroke="#3e4a57"><path d="M119.6 499.4 V504.2" stroke-width="1.1"/><rect x="121.8" y="500" width="5.2" height="5.2" stroke-dasharray="1.2 0.8" stroke-width="0.9"/><path d="M122 507 H127" stroke-width="0.8" stroke="#6a7582"/></g>
<!-- canvas size icon -->
<g fill="none" stroke="#3e4a57"><path d="M237.4 499.8 V504.6" stroke-width="1.1"/><rect x="239.8" y="500.2" width="5.6" height="4.6" stroke-width="1"/><path d="M240 506.9 H245.4" stroke-width="0.8" stroke="#6a7582"/></g>
<text class="t" style="font-size:9.6px" x="251.1" y="506.3" textLength="55.2" lengthAdjust="spacingAndGlyphs">3820 × 1784px</text>
<text class="t" style="font-size:9.6px" x="884.5" y="506.2" textLength="16.6" lengthAdjust="spacingAndGlyphs">50%</text>
<!-- zoom controls -->
<circle cx="912.1" cy="503.4" r="5.4" fill="#f7f7f7" stroke="#6b6b6b" stroke-width="0.9"/><path d="M909.8 503.4 H914.4" stroke="#444" stroke-width="1"/>
<path d="M926.7 502 H990.4" stroke="#cfcfcf" stroke-width="1"/>
<path d="M938 496.7 H945.3 V505.8 L941.65 509.3 L938 505.8Z" fill="#0b76d9"/>
<circle cx="1004.4" cy="503.4" r="5.4" fill="#f7f7f7" stroke="#6b6b6b" stroke-width="0.9"/><path d="M1001.6 503.4 H1007.2 M1004.4 500.6 V506.2" stroke="#444" stroke-width="1"/>
</svg>
</body>
</html>
